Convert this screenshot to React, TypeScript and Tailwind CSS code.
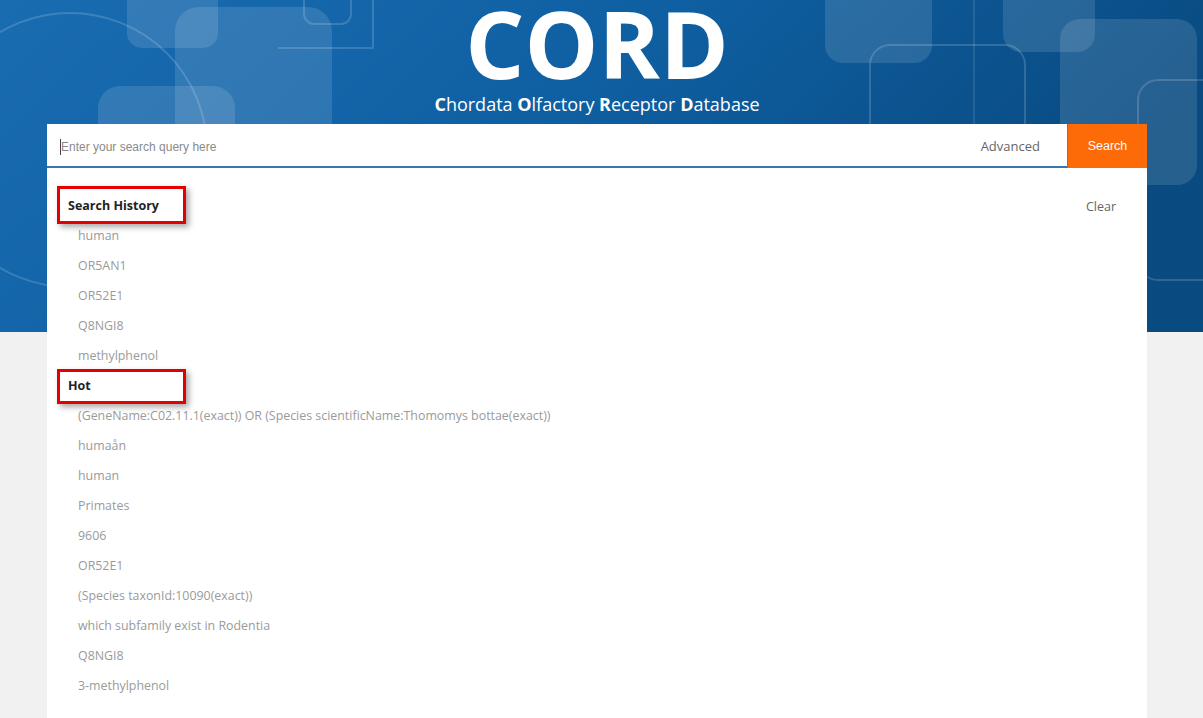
import React from 'react';

const history = ['human', 'OR5AN1', 'OR52E1', 'Q8NGI8', 'methylphenol'];

const hot = [
  '(GeneName:C02.11.1(exact)) OR (Species scientificName:Thomomys bottae(exact))',
  'humaån',
  'human',
  'Primates',
  '9606',
  'OR52E1',
  '(Species taxonId:10090(exact))',
  'which subfamily exist in Rodentia',
  'Q8NGI8',
  '3-methylphenol',
];

function HeaderShapes() {
  return (
    <svg className="absolute inset-0 h-full w-full" viewBox="0 0 1203 332" preserveAspectRatio="none">
      <defs>
        <linearGradient id="bg" x1="0" y1="0" x2="1" y2="0.3">
          <stop offset="0" stopColor="#1a6cb1" />
          <stop offset="0.5" stopColor="#0f60a3" />
          <stop offset="1" stopColor="#094a80" />
        </linearGradient>
      </defs>
      <rect width="1203" height="332" fill="url(#bg)" />
      <g fill="#ffffff" fillOpacity="0.12">
        <rect x="127" y="-30" width="91" height="78" rx="15" />
        <rect x="175" y="7" width="157" height="360" rx="24" />
        <rect x="98" y="86" width="137" height="280" rx="22" />
        <rect x="825" y="-30" width="107" height="93" rx="18" />
        <rect x="1003" y="-30" width="92" height="82" rx="18" />
        <rect x="1060" y="19" width="137" height="166" rx="20" />
      </g>
      <g fill="none" stroke="#ffffff" strokeOpacity="0.16" strokeWidth="2">
        <circle cx="70" cy="150" r="137" />
        <rect x="304" y="-20" width="47" height="44" rx="10" />
        <path d="M278 48 H373 V0" />
        <rect x="870" y="45" width="155" height="320" rx="20" />
        <path d="M974 0 V332" strokeOpacity="0.1" />
        <rect x="1138" y="80" width="120" height="200" rx="20" />
      </g>
    </svg>
  );
}

function Heading({ label, boxTop, boxHeight }: { label: string; boxTop: string; boxHeight: string }) {
  return (
    <div className="relative flex h-[30px] items-center pl-[21px] text-[12.5px] font-bold text-[#222]">
      <span>{label}</span>
      <div className={`absolute left-[10px] w-[129px] border-[3px] border-[#e40000] shadow-[3px_3px_6px_rgba(0,0,0,0.35)] ${boxTop} ${boxHeight}`} />
    </div>
  );
}

function Item({ text }: { text: string }) {
  return (
    <div className="flex h-[30px] items-center pl-[31px] text-[12.4px] text-[#9a9a9a]">{text}</div>
  );
}

export default function App() {
  return (
    <div className="min-h-[718px] bg-[#f1f1f1]" style={{ fontFamily: '"Open Sans", "Noto Sans", sans-serif' }}>
      <div className="relative h-[332px] overflow-visible">
        <div className="absolute inset-0 overflow-hidden">
          <HeaderShapes />
        </div>
        <div className="relative ml-[47px] w-[1100px]">
          <h1 className="text-center text-[93px] font-bold leading-[86px] text-white">CORD</h1>
          <p className="mt-[6px] text-center text-[18px] leading-[24px] text-white">
            <b>C</b>hordata <b>O</b>lfactory <b>R</b>eceptor <b>D</b>atabase
          </p>

          <div className="mt-[8px] flex h-[44px]">
            <div className="flex flex-1 items-center border-b-2 border-[#3b74b2] bg-white pt-[3px]">
              <div className="ml-[13px] h-[16px] w-px bg-[#444]" />
              <span className="flex-1 text-[12px] text-[#8a8a8a]" style={{ fontFamily: '"Liberation Sans", Arial, sans-serif' }}>
                Enter your search query here
              </span>
              <span className="mr-[27px] text-[13px] text-[#666]">Advanced</span>
            </div>
            <button
              className="flex w-[80px] items-center justify-center border-l border-[#c86020] bg-[#fd6a08] pt-[1px] text-[12.5px] text-white"
              style={{ fontFamily: '"Liberation Sans", Arial, sans-serif' }}
            >
              Search
            </button>
          </div>

          <div className="bg-white pt-[23px] pb-[40px]">
            <div className="relative">
              <Heading label="Search History" boxTop="top-[-5px]" boxHeight="h-[38px]" />
              <span className="absolute right-[31px] top-[7px] text-[12.5px] text-[#666]">Clear</span>
            </div>
            {history.map((h, i) => (
              <Item key={'h' + i} text={h} />
            ))}
            <Heading label="Hot" boxTop="top-[-2px]" boxHeight="h-[35px]" />
            {hot.map((h, i) => (
              <Item key={'t' + i} text={h} />
            ))}
          </div>
        </div>
      </div>
    </div>
  );
}
